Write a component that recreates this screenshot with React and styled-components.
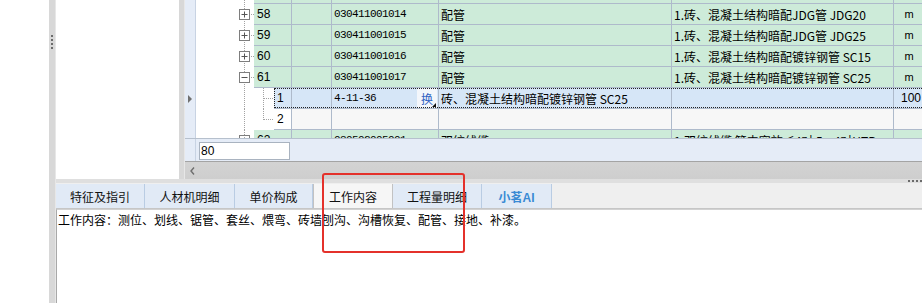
import React from 'react';
import styled, { createGlobalStyle } from 'styled-components';

const GlobalStyle = createGlobalStyle`
  html, body { margin: 0; padding: 0; background: #fff; overflow: hidden; }
  * { box-sizing: border-box; }
`;

const CJK = `"Noto Sans CJK SC", "Liberation Sans", sans-serif`;
const GRID = '#aebacb';
const GREEN = '#cdebd9';

const Page = styled.div`
  position: relative;
  display: flex;
  width: 922px;
  height: 303px;
  overflow: hidden;
  background: #fff;
  font-family: ${CJK};
  font-size: 12px;
  color: #000;
`;

const Gutter = styled.div`
  width: 49px;
  flex: none;
  background: #fff;
`;

const VSplit = styled.div`
  width: ${p => p.$w}px;
  flex: none;
  background: #d8d8d8;
  border-right: 1px solid #e7e7e7;
  display: flex;
  flex-direction: column;
  align-items: center;
  padding-top: 35px;
  gap: 2px;
`;

const GripDot = styled.span`
  width: 2px;
  height: 2px;
  background: #6b6b6b;
`;

const Main = styled.div`
  flex: 1;
  display: flex;
  flex-direction: column;
  min-width: 0;
`;

const Top = styled.div`
  height: 179px;
  flex: none;
  display: flex;
`;

const LeftPane = styled.div`
  width: 123px;
  flex: none;
  background: #fff;
`;

const GridPane = styled.div`
  flex: 1;
  display: flex;
  flex-direction: column;
  min-width: 0;
  overflow: hidden;
`;

const GridBody = styled.div`
  height: 138px;
  flex: none;
  overflow: hidden;
`;

const RowList = styled.div`
  margin-top: -17px;
`;

const Row = styled.div`
  display: flex;
  height: 21px;
`;

const RowHead = styled.div`
  width: 11px;
  flex: none;
  background: #e5ecf7;
  border-right: 1px solid #c8d3e3;
  display: flex;
  align-items: center;
  justify-content: center;

  ${p => p.$current && `
    &::before {
      content: '';
      border-left: 4px solid #707070;
      border-top: 4px solid transparent;
      border-bottom: 4px solid transparent;
    }
  `}
`;

const TreeCell = styled.div`
  width: ${p => p.$w}px;
  flex: none;
  background: #fff;
  svg { display: block; }
`;

const Strip = styled.div`
  position: relative;
  flex: none;
  display: grid;
  grid-template-columns: ${p => p.$seq}px 40px 107px 233px 222px 30px;
  background: ${p => p.$bg};

  ${p => p.$selected && `
    &::after {
      content: '';
      position: absolute;
      left: 0;
      right: 0;
      top: 0;
      bottom: 1px;
      border: 1px dotted #222;
      border-right: none;
      pointer-events: none;
    }
  `}
`;

const Cell = styled.div`
  display: flex;
  align-items: center;
  justify-content: ${p => p.$align || 'flex-start'};
  padding: 0 2px;
  border-right: 1px solid ${GRID};
  border-bottom: 1px solid ${GRID};
  white-space: nowrap;
  overflow: hidden;
  background: ${p => p.$bg || 'transparent'};
  font-family: ${p => (p.$mono ? '"Liberation Mono", monospace' : CJK)};
  font-size: ${p => (p.$mono ? '11px' : '12px')};
  letter-spacing: ${p => (p.$mono ? '-0.6px' : '0')};
`;

const SeqText = styled.span`
  font-family: "Liberation Sans", sans-serif;
  font-size: ${p => (p.$small ? '11px' : '12px')};
  padding-left: 1px;
`;

const SwapTag = styled.span`
  position: relative;
  margin-left: auto;
  margin-right: -1px;
  width: 20px;
  align-self: stretch;
  background: #f3f6fb;
  color: #2f62c2;
  font-family: ${CJK};
  font-size: 12px;
  letter-spacing: 0;
  display: flex;
  align-items: center;
  justify-content: center;

  &::after {
    content: '';
    position: absolute;
    right: 1px;
    bottom: 1px;
    border-left: 4px solid transparent;
    border-bottom: 4px solid #111;
  }
`;

const Band = styled.div`
  height: 23px;
  flex: none;
  display: flex;
  background: #e5ecf7;
  border-top: 1px solid #b6c0cd;
`;

const BandInput = styled.div`
  margin: 3px 0 0 3px;
  width: 91px;
  height: 18px;
  background: #fff;
  border: 1px solid #a9b3c0;
  font-family: "Liberation Sans", sans-serif;
  font-size: 12px;
  line-height: 16px;
  padding-left: 1px;
`;

const ScrollBar = styled.div`
  height: 18px;
  flex: none;
  display: flex;
  align-items: center;
  padding-left: 5px;
  background: linear-gradient(#d3d3d3, #cecece);
  border-top: 1px solid #a4a4a4;
`;

const HSplit = styled.div`
  height: 4px;
  flex: none;
  background: #dfdfdf;
  display: flex;
  align-items: center;
  justify-content: flex-end;
  gap: 2px;
`;

const TabStrip = styled.div`
  height: 26px;
  flex: none;
  display: flex;
  background: #efefef;
  border-bottom: 1px solid #c6c6c6;
`;

const Tab = styled.div`
  width: ${p => p.$w}px;
  flex: none;
  margin-top: 1px;
  display: flex;
  align-items: center;
  justify-content: center;
  background: ${p => (p.$active ? '#f6f6f6' : '#e1eaf6')};
  border-right: 1px solid ${p => (p.$active ? '#c2c2c2' : '#b9cce3')};
  border-left: ${p => (p.$active ? '1px solid #c2c2c2' : 'none')};
  color: ${p => (p.$ai ? '#3a8ad4' : '#111')};
  font-weight: ${p => (p.$ai ? 700 : 400)};
  font-family: ${p => (p.$ai ? `"Liberation Sans", ${CJK}` : CJK)};
  font-size: 12px;
`;

const Content = styled.div`
  flex: 1;
  background: #fff;
  border-top: 1px solid #d2d2d2;
  border-left: 1px solid #a8a8a8;
  padding: 2px 1px;
  line-height: 16px;
  font-size: 12px;
  white-space: nowrap;
`;

const Highlight = styled.div`
  position: absolute;
  left: 322px;
  top: 173px;
  width: 143px;
  height: 80px;
  border: 2px solid #e4312b;
  border-radius: 3px;
  pointer-events: none;
`;

const DOT = { stroke: '#a3a3a3', strokeDasharray: '1 1', strokeWidth: 1 };

const TreeGlyph = ({ kind }) => {
  if (kind === 'child' || kind === 'childLast') {
    return (
      <svg width="78" height="21">
        <line x1="48.5" y1="0" x2="48.5" y2="21" {...DOT} />
        <line x1="67.5" y1="0" x2="67.5" y2={kind === 'childLast' ? 11 : 21} {...DOT} />
        <line x1="68" y1="10.5" x2="78" y2="10.5" {...DOT} />
      </svg>
    );
  }
  return (
    <svg width="58" height="21">
      <line x1="48.5" y1="0" x2="48.5" y2="5" {...DOT} />
      <line x1="48.5" y1="15" x2="48.5" y2="21" {...DOT} />
      <line x1="53" y1="10.5" x2="58" y2="10.5" {...DOT} />
      <rect x="43.5" y="5.5" width="10" height="10" fill="#fff" stroke="#7e7e7e" />
      <line x1="45.5" y1="10.5" x2="51.5" y2="10.5" stroke="#555" />
      {kind === 'plus' && <line x1="48.5" y1="7.5" x2="48.5" y2="13.5" stroke="#555" />}
    </svg>
  );
};

// the first row is scrolled almost out of view, only its bottom edge shows
const rows = [
  { id: '', code: '', name: '', feature: '', unit: '', tree: 'plus', key: 'r57' },
  { id: '58', code: '030411001014', name: '配管', feature: '1.砖、混凝土结构暗配JDG管 JDG20', unit: 'm', tree: 'plus' },
  { id: '59', code: '030411001015', name: '配管', feature: '1.砖、混凝土结构暗配JDG管 JDG25', unit: 'm', tree: 'plus' },
  { id: '60', code: '030411001016', name: '配管', feature: '1.砖、混凝土结构暗配镀锌钢管 SC15', unit: 'm', tree: 'plus' },
  { id: '61', code: '030411001017', name: '配管', feature: '1.砖、混凝土结构暗配镀锌钢管 SC25', unit: 'm', tree: 'minus' },
  { id: '1', code: '4-11-36', swap: true, name: '砖、混凝土结构暗配镀锌钢管 SC25', feature: '', unit: '100', tree: 'child', selected: true },
  { id: '2', code: '', name: '', feature: '', unit: '', tree: 'childLast', blank: true },
  { id: '62', code: '030502005001', name: '双绞线缆', feature: '1.双绞线缆 管内穿放≤4对 5e-4对UTP', unit: 'm', tree: 'plus' },
];

const tabs = [
  { label: '特征及指引', w: 89 },
  { label: '人材机明细', w: 90 },
  { label: '单价构成', w: 78 },
  { label: '工作内容', w: 80, active: true },
  { label: '工程量明细', w: 89 },
  { label: '小茗AI', w: 70, ai: true },
];

const GridRow = ({ row }) => {
  const child = row.tree === 'child' || row.tree === 'childLast';
  const bg = row.selected ? '#d6e6f7' : row.blank ? '#f7f7f7' : GREEN;
  return (
    <Row>
      <RowHead $current={row.selected} />
      <TreeCell $w={child ? 78 : 58}>
        <TreeGlyph kind={row.tree} />
      </TreeCell>
      <Strip $seq={child ? 18 : 38} $bg={bg} $selected={row.selected}>
        <Cell $bg={row.blank ? '#fff' : undefined}><SeqText>{row.id}</SeqText></Cell>
        <Cell />
        <Cell $mono>
          {row.code}
          {row.swap && <SwapTag>换</SwapTag>}
        </Cell>
        <Cell>{row.name}</Cell>
        <Cell>{row.feature}</Cell>
        <Cell $align={row.unit === 'm' ? 'center' : 'flex-end'}>
          <SeqText $small={row.unit === 'm'}>{row.unit}</SeqText>
        </Cell>
      </Strip>
    </Row>
  );
};

export default function App() {
  return (
    <Page>
      <GlobalStyle />
      <Gutter />
      <VSplit $w={7}>
        <GripDot />
        <GripDot />
        <GripDot />
        <GripDot />
      </VSplit>
      <Main>
        <Top>
          <LeftPane />
          <VSplit $w={6} />
          <GridPane>
            <GridBody>
              <RowList>
                {rows.map(r => (
                  <GridRow key={r.key || r.id + r.tree} row={r} />
                ))}
              </RowList>
            </GridBody>
            <Band>
              <RowHead />
              <BandInput>80</BandInput>
            </Band>
            <ScrollBar>
              <svg width="5" height="8">
                <polyline points="4,0.5 1,4 4,7.5" fill="none" stroke="#6e6e6e" strokeWidth="1.4" />
              </svg>
            </ScrollBar>
          </GridPane>
        </Top>
        <HSplit>
          <GripDot />
          <GripDot />
          <GripDot />
          <GripDot />
        </HSplit>
        <TabStrip>
          {tabs.map(t => (
            <Tab key={t.label} $w={t.w} $active={t.active} $ai={t.ai}>
              {t.label}
            </Tab>
          ))}
        </TabStrip>
        <Content>工作内容：测位、划线、锯管、套丝、煨弯、砖墙刨沟、沟槽恢复、配管、接地、补漆。</Content>
      </Main>
      <Highlight />
    </Page>
  );
}
